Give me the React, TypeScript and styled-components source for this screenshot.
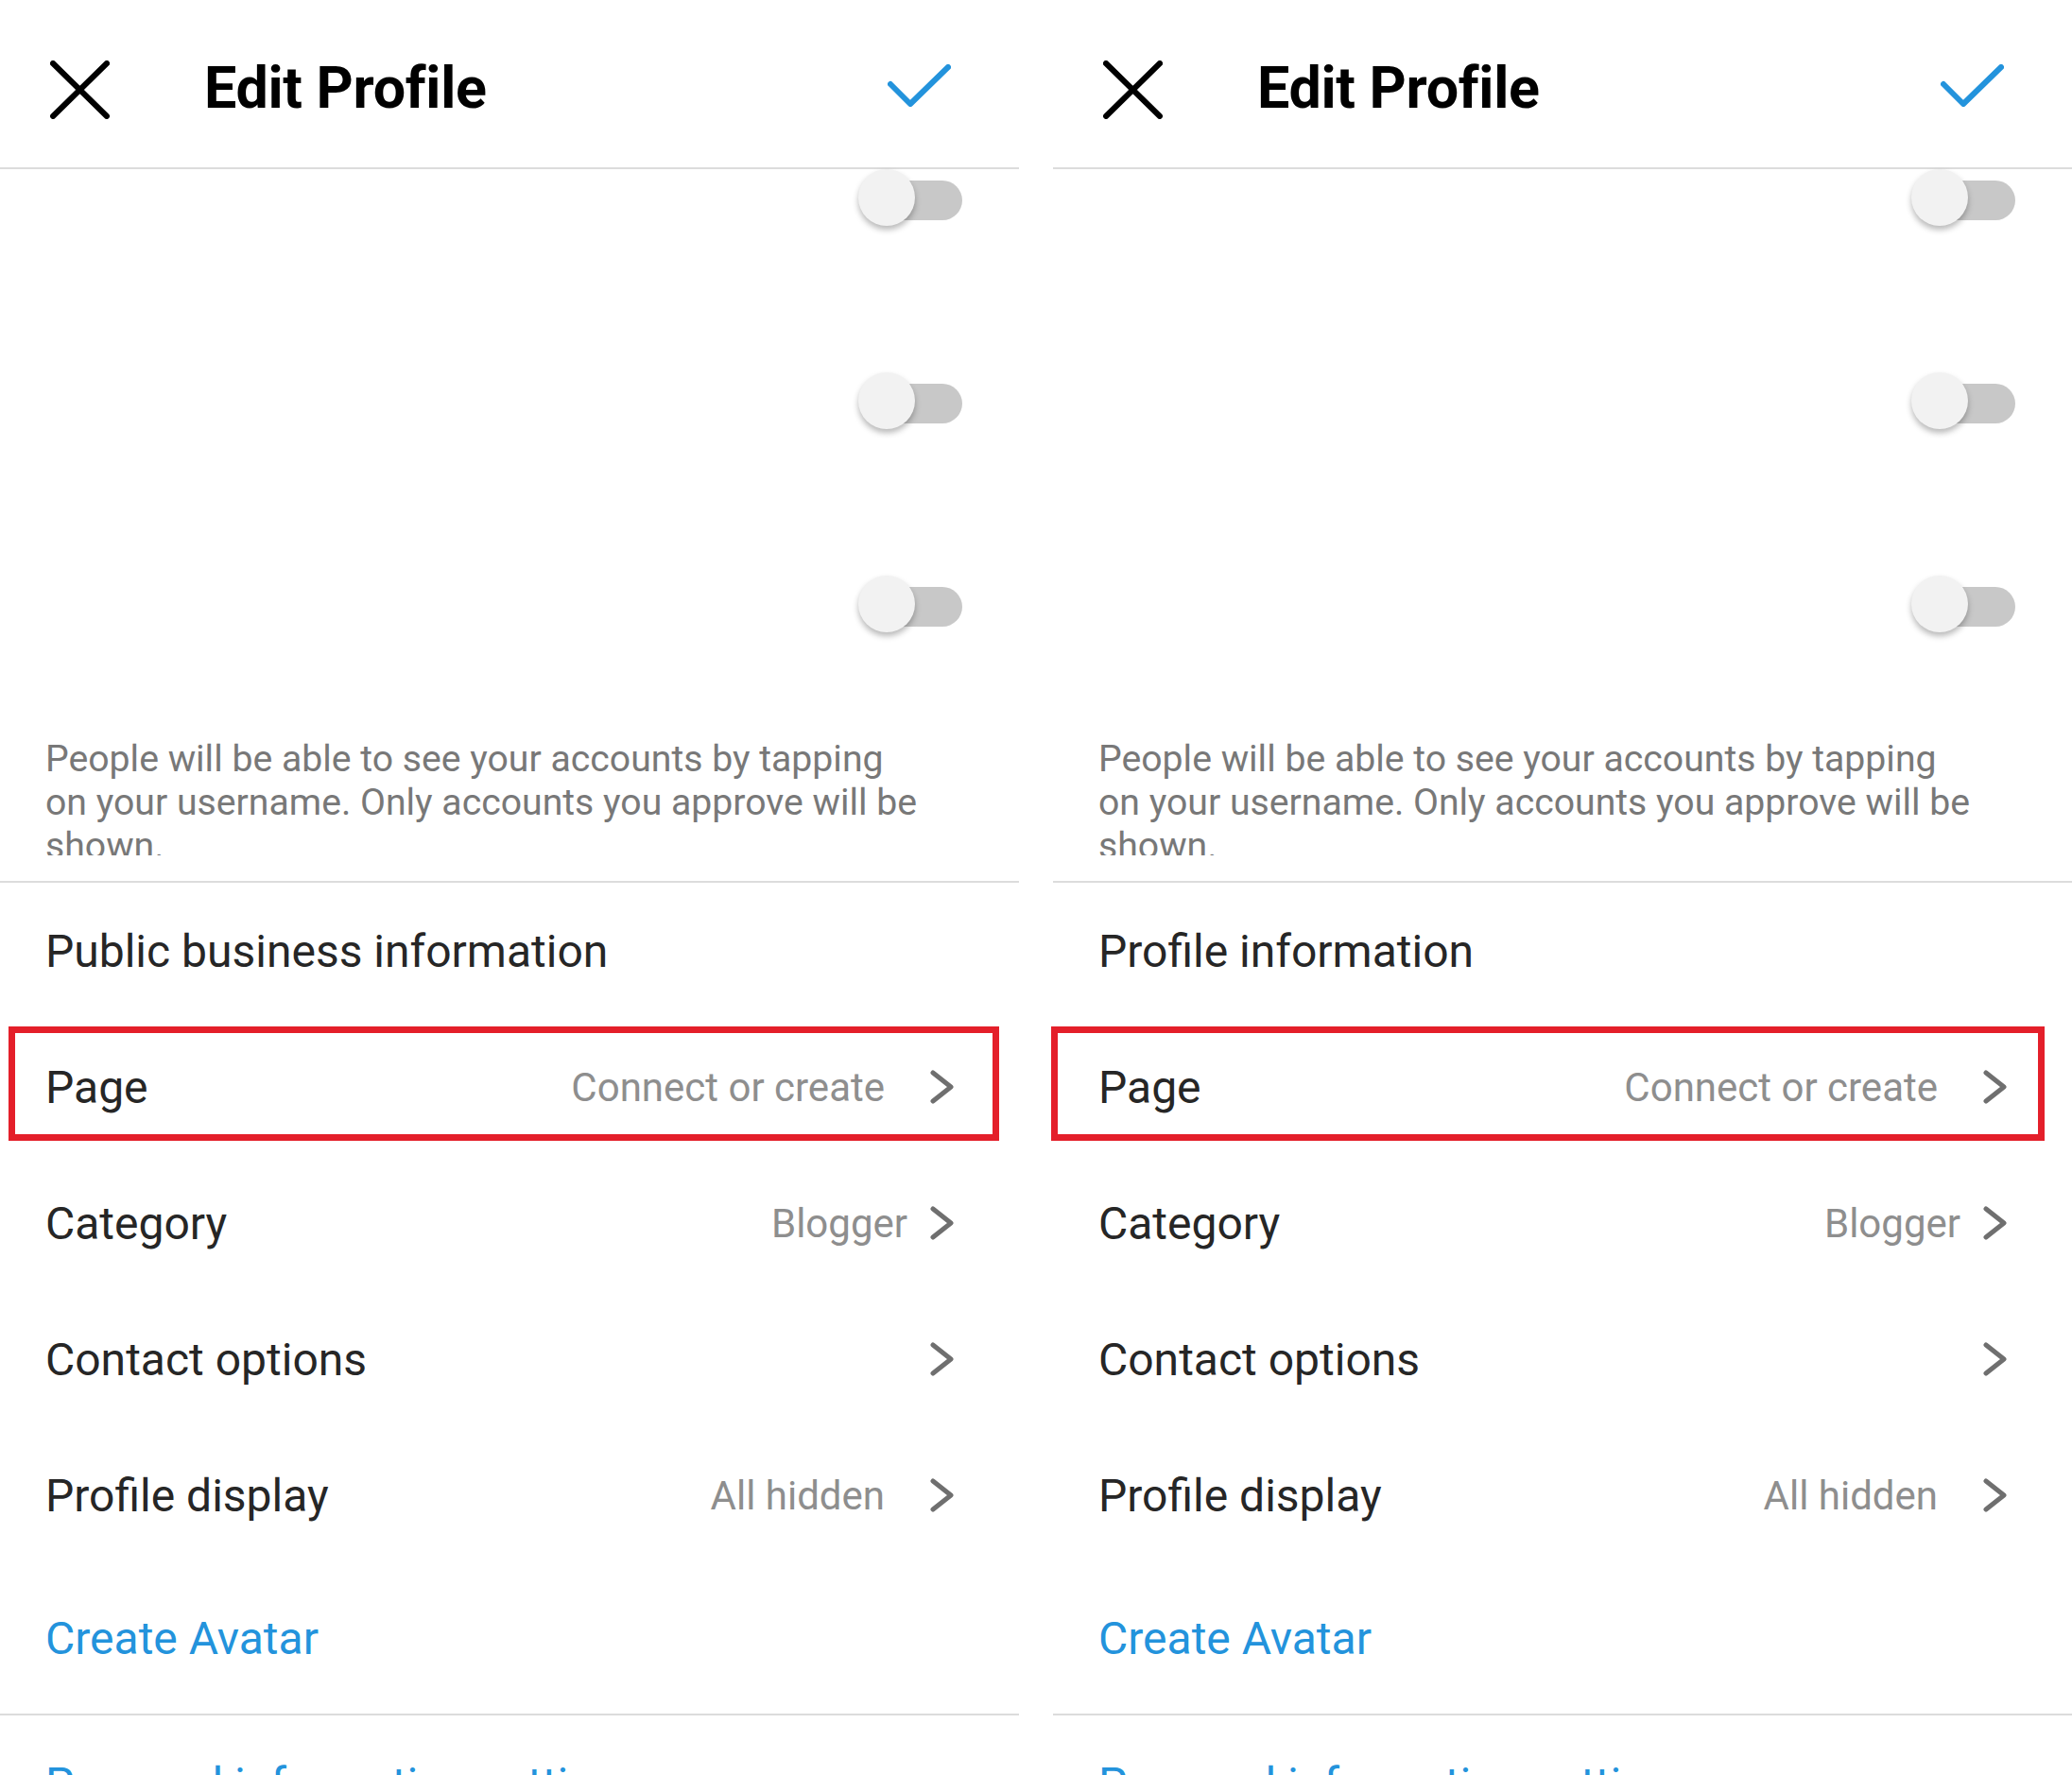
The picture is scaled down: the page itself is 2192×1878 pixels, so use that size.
import React from 'react';
import styled, { createGlobalStyle } from 'styled-components';

const GlobalStyle = createGlobalStyle`
    html, body {
        margin: 0;
        padding: 0;
        background: #fff;
        overflow: hidden;
    }

    body {
        font-family: Roboto, 'Noto Sans', Arial, sans-serif;
    }
`;

type Row = {
    label: string;
    value?: string;
    gap?: number;
    highlight?: boolean;
};

const rows: Row[] = [
    { label: 'Page', value: 'Connect or create', gap: 48, highlight: true },
    { label: 'Category', value: 'Blogger', gap: 24 },
    { label: 'Contact options' },
    { label: 'Profile display', value: 'All hidden', gap: 48 },
];

function CloseIcon() {
    return (
        <svg width="63" height="62" viewBox="0 0 63 62">
            <path d="M3 3 L60 59 M60 3 L3 59" stroke="#000" strokeWidth="6" strokeLinecap="round" fill="none" />
        </svg>
    );
}

function CheckIcon() {
    return (
        <svg width="67" height="45" viewBox="0 0 67 45">
            <path
                d="M3 21 L24 42 L64 3"
                stroke="#2393dc"
                strokeWidth="6"
                strokeLinecap="round"
                strokeLinejoin="round"
                fill="none"
            />
        </svg>
    );
}

function Chevron() {
    return (
        <svg width="26" height="36" viewBox="0 0 26 36">
            <path
                d="M3 3 L22 18 L3 33"
                stroke="#6f6f6f"
                strokeWidth="5"
                strokeLinecap="round"
                strokeLinejoin="round"
                fill="none"
            />
        </svg>
    );
}

function Toggle() {
    return (
        <ToggleBox>
            <Track />
            <Thumb />
        </ToggleBox>
    );
}

function EditProfile({ section, boxLeft, boxWidth }: { section: string; boxLeft: number; boxWidth: number }) {
    return (
        <Panel>
            <Header>
                <CloseIcon />
                <Title>Edit Profile</Title>
                <CheckSlot>
                    <CheckIcon />
                </CheckSlot>
            </Header>

            <ToggleList>
                <ToggleRow>
                    <Toggle />
                </ToggleRow>
                <ToggleRow>
                    <Toggle />
                </ToggleRow>
                <ToggleRow>
                    <Toggle />
                </ToggleRow>
            </ToggleList>

            <Description>
                People will be able to see your accounts by tapping on your username. Only accounts you approve
                will be shown.
            </Description>

            <Divider />

            <SettingRow>
                <Label>{section}</Label>
            </SettingRow>

            {rows.map((row) => (
                <SettingRow key={row.label}>
                    <Label>{row.label}</Label>
                    <RowEnd>
                        {row.value && <Value $gap={row.gap ?? 48}>{row.value}</Value>}
                        <Chevron />
                    </RowEnd>
                    {row.highlight && <Highlight $left={boxLeft} $width={boxWidth} />}
                </SettingRow>
            ))}

            <LinkRow $height={159}>
                <LinkText>Create Avatar</LinkText>
            </LinkRow>

            <Divider />

            <LinkRow $height={144}>
                <LinkText>Personal information settings</LinkText>
            </LinkRow>
        </Panel>
    );
}

export default function App() {
    return (
        <>
            <GlobalStyle />
            <Screen>
                <EditProfile section="Public business information" boxLeft={9} boxWidth={1048} />
                <EditProfile section="Profile information" boxLeft={-2} boxWidth={1051} />
            </Screen>
        </>
    );
}

const Screen = styled.div`
    display: flex;
    align-items: flex-start;
    gap: 36px;
    width: 2192px;
    height: 1878px;
    overflow: hidden;
    background: #fff;
`;

const Panel = styled.div`
    display: flex;
    flex-direction: column;
    flex: 0 0 1078px;
    width: 1078px;

    & > * {
        flex-shrink: 0;
    }
`;

const Header = styled.div`
    display: flex;
    align-items: center;
    box-sizing: border-box;
    height: 179px;
    padding: 12px 0 0 53px;
    border-bottom: 2px solid #dcdcdc;
`;

const Title = styled.div`
    margin-left: 100px;
    margin-top: -4px;
    font-family: Roboto, Arial, sans-serif;
    font-weight: 700;
    font-size: 61px;
    color: #000;
    letter-spacing: -0.3px;
`;

const CheckSlot = styled.div`
    display: flex;
    margin-left: auto;
    margin-right: 72px;
    margin-top: -9px;
`;

const ToggleList = styled.div`
    display: flex;
    flex-direction: column;
    gap: 155px;
    padding: 0 60px 0 0;
`;

const ToggleRow = styled.div`
    display: flex;
    justify-content: flex-end;
`;

const ToggleBox = styled.div`
    position: relative;
    width: 110px;
    height: 60px;
`;

const Track = styled.div`
    position: absolute;
    right: 0;
    top: 12px;
    width: 100px;
    height: 42px;
    border-radius: 21px;
    background: #c8c8c8;
`;

const Thumb = styled.div`
    position: absolute;
    left: 0;
    top: 0;
    width: 60px;
    height: 60px;
    border-radius: 50%;
    background: #f2f2f2;
    box-shadow: 0 4px 6px rgba(0, 0, 0, 0.28);
`;

const Description = styled.div`
    box-sizing: border-box;
    width: 1002px;
    height: 125px;
    margin: 111px 0 27px;
    padding: 0 24px 0 48px;
    overflow: hidden;
    font-size: 39.2px;
    line-height: 46px;
    color: #787878;
`;

const Divider = styled.div`
    height: 2px;
    background: #dcdcdc;
`;

const SettingRow = styled.div`
    position: relative;
    display: flex;
    align-items: center;
    justify-content: space-between;
    box-sizing: border-box;
    height: 144px;
    padding: 0 68px 0 48px;
`;

const Label = styled.div`
    font-size: 48px;
    color: #262626;
`;

const RowEnd = styled.div`
    display: flex;
    align-items: center;
`;

const Value = styled.div<{ $gap: number }>`
    margin-right: ${(p) => p.$gap}px;
    font-size: 42px;
    color: #8e8e8e;
`;

const Highlight = styled.div<{ $left: number; $width: number }>`
    position: absolute;
    top: 8px;
    left: ${(p) => p.$left}px;
    width: ${(p) => p.$width}px;
    height: 121px;
    box-sizing: border-box;
    border: 7px solid #e41f2a;
    pointer-events: none;
`;

const LinkRow = styled.div<{ $height: number }>`
    display: flex;
    align-items: center;
    box-sizing: border-box;
    height: ${(p) => p.$height}px;
    padding: 0 48px;
`;

const LinkText = styled.div`
    font-size: 48px;
    color: #2393dc;
`;
